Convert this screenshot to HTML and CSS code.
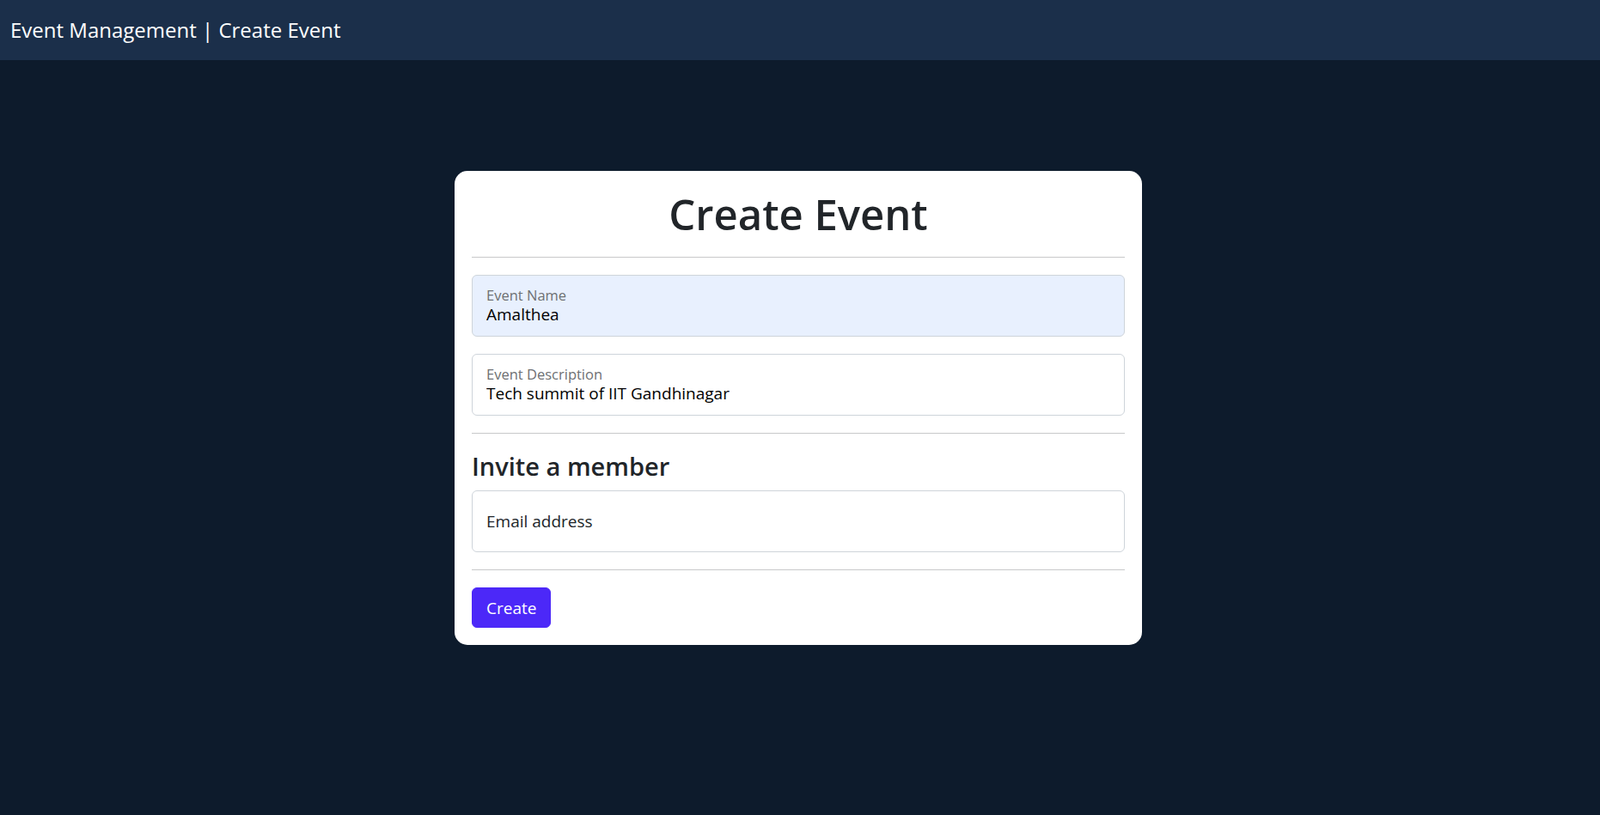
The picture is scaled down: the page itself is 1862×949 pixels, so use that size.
FILE: index.html
```html
<!DOCTYPE html>
<html lang="en">
<head>
<meta charset="utf-8">
<title>Event Management | Create Event</title>
<link rel="stylesheet" href="styles.css">
</head>
<body>
<header class="navbar">
  <span class="brand">Event Management | Create Event</span>
</header>
<main class="page">
  <form class="card">
    <h1 class="title">Create Event</h1>
    <hr class="divider">
    <div class="field field-filled field-autofill mb">
      <label class="field-label" for="name">Event Name</label>
      <input class="field-input" id="name" type="text" value="Amalthea">
    </div>
    <div class="field field-filled">
      <label class="field-label" for="desc">Event Description</label>
      <input class="field-input" id="desc" type="text" value="Tech summit of IIT Gandhinagar">
    </div>
    <hr class="divider">
    <h4 class="subtitle">Invite a member</h4>
    <div class="field field-empty">
      <input class="field-input" id="email" type="email" placeholder="Email address">
    </div>
    <hr class="divider">
    <button class="btn" type="button">Create</button>
  </form>
</main>
</body>
</html>
```
FILE: styles.css
```css
* { box-sizing: border-box; }
html, body { margin: 0; padding: 0; }
body {
  background: #0d1b2c;
  font-family: "Open Sans", "Noto Sans", sans-serif;
  color: #212529;
  min-height: 949px;
}
.navbar {
  height: 70px;
  background: #1b2f4a;
  display: flex;
  align-items: center;
  padding: 0 12px;
}
.brand {
  color: #ffffff;
  font-size: 24px;
  line-height: 30px;
}
.page {
  display: flex;
  justify-content: center;
  padding-top: 129px;
}
.card {
  width: 800px;
  background: #ffffff;
  border-radius: 15px;
  padding: 20px;
  margin-right: 4px;
}
.title {
  margin: 0;
  text-align: center;
  font-size: 49px;
  line-height: 60px;
  font-weight: 600;
}
.divider {
  margin: 20px 0;
  border: 0;
  border-top: 1px solid #c8c9ca;
}
.field {
  height: 72px;
  border: 1px solid #ced4da;
  border-radius: 6px;
  padding: 0 16px;
  display: flex;
  flex-direction: column;
  justify-content: center;
  background: #ffffff;
}
.field-filled { padding-bottom: 2px; }
.field-autofill { background: #e8f0fe; }
.mb { margin-bottom: 20px; }
.field-label {
  font-size: 16.5px;
  line-height: 21px;
  color: #6e7073;
}
.field-input {
  border: 0;
  padding: 0;
  margin: 0;
  background: transparent;
  font: inherit;
  font-size: 19px;
  line-height: 24px;
  color: #000000;
  outline: none;
  width: 100%;
}
.field-empty .field-input::placeholder {
  color: #212529;
  opacity: 1;
}
.subtitle {
  margin: 0 0 10px;
  font-size: 29px;
  line-height: 36px;
  font-weight: 600;
}
.btn {
  display: block;
  height: 47px;
  padding: 0 16px;
  border: 1px solid #4c28f8;
  border-radius: 6px;
  background: #4c28f8;
  color: #ffffff;
  font-family: inherit;
  font-size: 19px;
}
```
